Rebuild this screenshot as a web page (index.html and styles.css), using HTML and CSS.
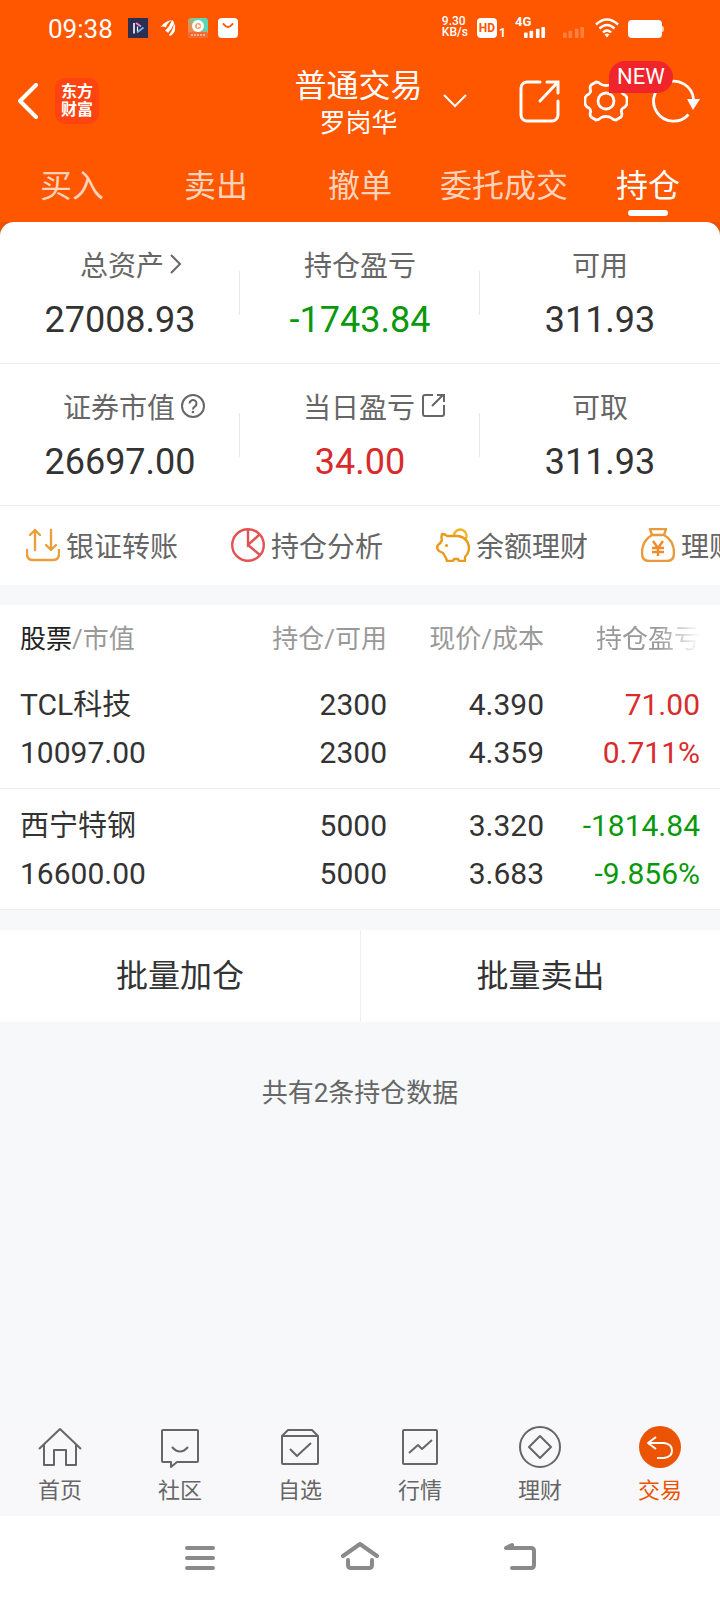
FILE: index.html
```html
<!DOCTYPE html>
<html lang="zh-CN">
<head>
    <meta charset="UTF-8">
    <meta name="viewport" content="width=device-width, initial-scale=1.0">
    <title>普通交易 - 持仓</title>
    <link rel="stylesheet" href="styles.css">
</head>
<body>
    <header class="header">
        <div class="status-bar">
            <span class="clock">09:38</span>
            <svg class="app-icon" width="20" height="20" viewBox="0 0 20 20" fill="none">
                <rect width="20" height="20" fill="#2b2f52"/>
                <path d="M6 5v10.500" stroke="#fff" stroke-width="1.6"/>
                <path d="M8 5l5 3.500" stroke="#ee8fd0" stroke-width="1.8"/>
                <path d="M15.500 9.500L9 14.500" stroke="#6fb4f5" stroke-width="1.8"/>
                <path d="M9.500 8.500V13" stroke="#fff" stroke-width="1.2"/>
            </svg>
            <svg class="app-icon" width="20" height="20" viewBox="0 0 20 20" fill="#fff">
                <path d="M2.500 9Q7 3 14 2Q9 5 8 9.500Q5 8 2.500 9zM7 13Q12 8 14 2Q16 3 16 5Q14 11 10 15Q9 13 7 13zM11 17Q15 12 16 5Q18 8 17 12Q16 16 12 18z"/>
            </svg>
            <svg class="app-icon" width="20" height="20" viewBox="0 0 20 20">
                <defs>
                    <linearGradient id="video" x1="0" y1="1" x2="1" y2="0">
                        <stop offset="0.3" stop-color="#f08a4b"/>
                        <stop offset="0.7" stop-color="#5cd6b4"/>
                    </linearGradient>
                </defs>
                <rect width="20" height="20" rx="3" fill="url(#video)"/>
                <rect y="14" width="20" height="6" rx="2" fill="#f46a35"/>
                <circle cx="10" cy="8" r="4.5" fill="#f0a060" stroke="#fff" stroke-width="3"/>
                <path d="M9 6l4 2-4 2z" fill="#fff"/>
                <path d="M3 17h14" stroke="#ffc9a8" stroke-width="1.5" stroke-dasharray="2 1"/>
            </svg>
            <svg class="app-icon" width="20" height="20" viewBox="0 0 20 20">
                <rect width="20" height="20" rx="4" fill="#fff"/>
                <path d="M5.5 6q4.500 6 9 0" fill="none" stroke="#ff5600" stroke-width="2" stroke-linecap="round"/>
            </svg>
            <div class="status-right">
                <span class="net-speed">9.30<br>KB/s</span>
                <span class="hd"><b>HD</b><i>1</i></span>
                <span class="signal">
                    <b>4G</b>
                    <svg width="24" height="11" viewBox="0 0 24 12" fill="#fff">
                        <rect y="6" width="4" height="6" rx="1"/>
                        <rect x="6" y="4" width="4" height="8" rx="1"/>
                        <rect x="13" y="2" width="4" height="10" rx="1"/>
                        <rect x="19" width="4" height="12" rx="1"/>
                    </svg>
                </span>
                <svg class="signal-off" width="24" height="11" viewBox="0 0 24 12" fill="#fff">
                    <rect y="6" width="4" height="6" rx="1"/>
                    <rect x="6" y="4" width="4" height="8" rx="1"/>
                    <rect x="13" y="2" width="4" height="10" rx="1"/>
                    <rect x="19" width="4" height="12" rx="1"/>
                </svg>
                <svg class="wifi" width="24" height="20" viewBox="0 0 24 20" fill="none" stroke="#fff" stroke-width="2.4">
                    <path d="M1 6.5q11-10 22 0M4.500 10.500q7.500-7 15 0M8 14.500q4-4 8 0"/>
                    <path d="M9.500 16.500L12 19.500l2.500-3q-2.500-2-5 0z" fill="#fff" stroke="none"/>
                </svg>
                <svg class="battery" width="36" height="18" viewBox="0 0 36 18">
                    <rect width="34" height="18" rx="4" fill="#fff"/>
                    <path d="M34 6q2 0 2 3t-2 3z" fill="#ffd0b5"/>
                </svg>
            </div>
        </div>

        <div class="top-bar">
            <div class="top-left">
                <button class="icon-btn" aria-label="返回">
                    <svg width="22" height="36" viewBox="0 0 22 36" fill="none" stroke="#fff" stroke-width="4" stroke-linecap="round" stroke-linejoin="round">
                        <path d="M19 2L3 18l16 16"/>
                    </svg>
                </button>
                <span class="logo">东方<br>财富</span>
            </div>
            <div class="account">
                <h1>普通交易</h1>
                <p>罗岗华</p>
            </div>
            <div class="top-right">
                <button class="icon-btn switch" aria-label="切换账户">
                    <svg width="24" height="14" viewBox="0 0 24 14" fill="none" stroke="#fff" stroke-width="2">
                        <path d="M1 1l11 11L23 1"/>
                    </svg>
                </button>
                <button class="icon-btn" aria-label="分享">
                    <svg width="41" height="43" viewBox="0 0 41 43" fill="none" stroke="#fff" stroke-width="3" stroke-linecap="round">
                        <path d="M21 2H8a6 6 0 0 0-6 6v27a6 6 0 0 0 6 6h25a6 6 0 0 0 6-6V21"/>
                        <path d="M21 21L38 3M28 2h11v11"/>
                    </svg>
                </button>
                <button class="icon-btn settings" aria-label="设置">
                    <svg width="44" height="44" viewBox="0 0 44 44" fill="none" stroke="#fff" stroke-width="2.8" stroke-linejoin="round">
                        <path d="M43 19v6q-1 3-4 4q-2 1.500-1.500 4q1 3-.5 5l-5 3q-3 0-4.500-2q-2-1.500-5.500-1.500t-5.500 1.500q-1.500 2-4.500 2l-5-3q-1.500-2-.5-5q.5-2.500-1.500-4q-3-1-4-4v-6q1-3 4-4q2-1.500 1.500-4q-1-3 .5-5l5-3q3 0 4.500 2q2 1.500 5.500 1.500t5.500-1.500q1.500-2 4.500-2l5 3q1.500 2 .5 5q-.5 2.500 1.500 4q3 1 4 4z"/>
                        <circle cx="22" cy="22" r="8"/>
                    </svg>
                    <span class="badge">NEW</span>
                </button>
                <button class="icon-btn" aria-label="刷新">
                    <svg width="48" height="44" viewBox="0 0 48 44">
                        <path d="M36.500 35.500A20 20 0 1 1 41.500 20" fill="none" stroke="#fff" stroke-width="2.8"/>
                        <path d="M35 20h13l-7 11z" fill="#fff"/>
                    </svg>
                </button>
            </div>
        </div>

        <nav class="tabs">
            <a href="#buy">买入</a>
            <a href="#sell">卖出</a>
            <a href="#cancel">撤单</a>
            <a href="#orders">委托成交</a>
            <a href="#positions" class="active">持仓</a>
        </nav>
    </header>

    <main>
        <section class="summary">
            <div class="stat-row">
                <div class="stat">
                    <div class="stat-label">总资产
                        <svg class="arrow" width="12" height="20" viewBox="0 0 12 20" fill="none" stroke="#666" stroke-width="2">
                            <path d="M1 1l9 9-9 9"/>
                        </svg>
                    </div>
                    <div class="stat-value">27008.93</div>
                </div>
                <div class="stat">
                    <div class="stat-label">持仓盈亏</div>
                    <div class="stat-value down">-1743.84</div>
                </div>
                <div class="stat">
                    <div class="stat-label">可用</div>
                    <div class="stat-value">311.93</div>
                </div>
            </div>
            <div class="stat-row">
                <div class="stat">
                    <div class="stat-label">证券市值
                        <svg class="hint" width="24" height="24" viewBox="0 0 24 24" fill="none" stroke="#666" stroke-width="2">
                            <circle cx="12" cy="12" r="11"/>
                            <path d="M8.500 9.500a3.500 3.500 0 1 1 5.500 2.900q-2 1.300-2 3.100"/>
                            <circle cx="12" cy="18" r="1.3" fill="#666" stroke="none"/>
                        </svg>
                    </div>
                    <div class="stat-value">26697.00</div>
                </div>
                <div class="stat">
                    <div class="stat-label">当日盈亏
                        <svg class="hint" width="24" height="24" viewBox="0 0 24 24" fill="none" stroke="#666" stroke-width="2">
                            <path d="M12 1H4a2 2 0 0 0-2 2v17a2 2 0 0 0 2 2h17a2 2 0 0 0 2-2v-9"/>
                            <path d="M11 12L22 1M16 1h7v7"/>
                        </svg>
                    </div>
                    <div class="stat-value up">34.00</div>
                </div>
                <div class="stat">
                    <div class="stat-label">可取</div>
                    <div class="stat-value">311.93</div>
                </div>
            </div>
            <nav class="shortcuts">
                <a href="#transfer">
                    <svg width="34" height="34" viewBox="0 0 34 34" fill="none" stroke="#e9a03b" stroke-width="2.4" stroke-linecap="round" stroke-linejoin="round">
                        <path d="M9 22V2M4 7l5-5 5 5M25 2v20M20 17l5 5 5-5"/>
                        <path d="M1 22v4q0 6 6 6h20q6 0 6-6v-4"/>
                    </svg>
                    银证转账
                </a>
                <a href="#analysis">
                    <svg width="34" height="34" viewBox="0 0 34 34" fill="none" stroke="#e35252" stroke-width="2.4">
                        <circle cx="17" cy="17" r="15.8"/>
                        <path d="M17 1v16l11.500-10.500M17 17l12 10"/>
                    </svg>
                    持仓分析
                </a>
                <a href="#balance">
                    <svg width="34" height="34" viewBox="0 0 34 34" fill="none" stroke="#e99a1a" stroke-width="2.4" stroke-linejoin="round">
                        <path d="M18 7a6.300 6.300 0 1 1 11 5" stroke="#efb52a"/>
                        <path d="M6 6q3 0 5 2h11c7 1 11 6 11 12 0 4-2 7-4 9v4h-6l-1-2h-4l-1 2H11l-1-3-3-5-4-2q-3-3-1-6 3-2 4-5-1-2 0-6z"/>
                        <circle cx="10.5" cy="17.5" r="1.6" fill="#e99a1a" stroke="none"/>
                    </svg>
                    余额理财
                </a>
                <a href="#wealth">
                    <svg width="34" height="34" viewBox="0 0 34 34" fill="none" stroke="#e99a3a" stroke-width="2.4" stroke-linejoin="round">
                        <path d="M11 7L9 1h16l-2 6zM11 7C4 11 1 18 1 25q0 8 7 8h18q7 0 7-8c0-7-3-14-10-18"/>
                        <path d="M12 13l5 7 5-7M11 20h12M11 24h12M17 20v8" stroke="#f08a2a"/>
                    </svg>
                    理财产品
                </a>
            </nav>
        </section>

        <section class="positions">
            <table>
                <thead>
                    <tr>
                        <th><b>股票</b>/市值</th>
                        <th>持仓/可用</th>
                        <th>现价/成本</th>
                        <th><span class="fade">持仓盈亏</span></th>
                    </tr>
                </thead>
                <tbody>
                    <tr>
                        <td>TCL<span class="cn">科技</span><br>10097.00</td>
                        <td>2300<br>2300</td>
                        <td>4.390<br>4.359</td>
                        <td class="up">71.00<br>0.711%</td>
                    </tr>
                    <tr>
                        <td><span class="cn">西宁特钢</span><br>16600.00</td>
                        <td>5000<br>5000</td>
                        <td>3.320<br>3.683</td>
                        <td class="down">-1814.84<br>-9.856%</td>
                    </tr>
                </tbody>
            </table>
        </section>

        <div class="batch">
            <button>批量加仓</button>
            <button>批量卖出</button>
        </div>

        <p class="total">共有2条持仓数据</p>
    </main>

    <nav class="tab-bar">
        <a href="#home">
            <svg width="44" height="44" viewBox="0 0 44 44">
                <path d="M1 23L22 3l21 20M6 19v20h10V24h12v15h10V19"/>
            </svg>
            首页
        </a>
        <a href="#community">
            <svg width="44" height="44" viewBox="0 0 44 44">
                <path d="M5 4h34q1 0 1 1v30q0 1-1 1H19l-6 5v-5H5q-1 0-1-1V5q0-1 1-1z"/>
                <path d="M14 21q8 9 16 0"/>
            </svg>
            社区
        </a>
        <a href="#watchlist">
            <svg width="44" height="44" viewBox="0 0 44 44">
                <path d="M4 10l6-6h24l6 6v27q0 1-1 1H5q-1 0-1-1zM4 10h36"/>
                <path d="M12 23l7 7 14-13"/>
            </svg>
            自选
        </a>
        <a href="#market">
            <svg width="44" height="44" viewBox="0 0 44 44">
                <rect x="5" y="4" width="34" height="34" rx="1"/>
                <path d="M11 27l9-8 4 4 10-9"/>
            </svg>
            行情
        </a>
        <a href="#finance">
            <svg width="44" height="44" viewBox="0 0 44 44">
                <circle cx="22" cy="21" r="20"/>
                <path d="M22 10l11 11-11 11-11-11z"/>
            </svg>
            理财
        </a>
        <a href="#trade" class="active">
            <svg width="44" height="44" viewBox="0 0 44 44">
                <circle cx="22" cy="21" r="21" fill="#ea5404"/>
                <path d="M18 11l-8 6 8 6M10 17h16q8 1 8 7.500t-8 7.500h-7" stroke="#fff"/>
            </svg>
            交易
        </a>
    </nav>

    <div class="system-nav">
        <button class="icon-btn" aria-label="最近任务">
            <svg width="40" height="32" viewBox="0 0 40 32">
                <path d="M7 6h26M7 16h26M7 26h26"/>
            </svg>
        </button>
        <button class="icon-btn" aria-label="主屏幕">
            <svg width="40" height="32" viewBox="0 0 40 32">
                <path d="M3 14L20 2l17 12M8 18v5q0 3 3 3h18q3 0 3-3v-5"/>
            </svg>
        </button>
        <button class="icon-btn" aria-label="后退">
            <svg width="40" height="32" viewBox="0 0 40 32">
                <path d="M12 3L6 6h25q3 0 3 3v14q0 3-3 3H12"/>
            </svg>
        </button>
    </div>
</body>
</html>
```
FILE: styles.css
```css
* {
    box-sizing: border-box;
}

body {
    margin: 0;
    min-height: 100vh;
    display: flex;
    flex-direction: column;
    font-family: Roboto, "Noto Sans CJK SC", sans-serif;
    background-color: #f6f8fa;
    color: #333;
}

h1, p {
    margin: 0;
    font-weight: normal;
}

a {
    color: inherit;
    text-decoration: none;
}

button {
    border: none;
    background: none;
    padding: 0;
    color: inherit;
    font-family: inherit;
    cursor: pointer;
}

svg {
    display: block;
    flex-shrink: 0;
}

.account,
.stat-label,
.shortcuts,
.tab-bar {
    font-family: "Noto Sans CJK SC", sans-serif;
}

.up {
    color: #d92b2b;
}

.down {
    color: #0b980b;
}

/* header */
.header {
    background-color: #ff5600;
    color: #fff;
}

.status-bar {
    display: flex;
    align-items: center;
    gap: 10px;
    height: 56px;
    padding: 0 56px 0 48px;
}

.clock {
    font-size: 26px;
    line-height: 32px;
    padding-top: 2px;
    margin-right: 5px;
}

.status-right {
    display: flex;
    align-items: flex-end;
    height: 20px;
    margin-left: auto;
    gap: 9px;
}

.net-speed {
    font-size: 12px;
    line-height: 11px;
    font-weight: 500;
}

.hd {
    display: flex;
    align-items: flex-end;
    gap: 2px;
    font-size: 12px;
    line-height: 10px;
}

.hd b {
    padding: 0 2px;
    line-height: 20px;
    border-radius: 4px;
    background-color: #fff;
    color: #ff5600;
}

.hd i {
    font-style: normal;
    font-weight: bold;
}

.signal b {
    display: block;
    font-size: 13px;
    line-height: 11px;
}

.signal svg {
    margin-left: 8px;
}

.signal-off {
    margin-left: 6px;
    opacity: 0.25;
}

.top-bar {
    display: grid;
    grid-template-columns: 1fr auto 1fr;
    align-items: center;
    padding: 7px 20px 7px 17px;
}

.top-left,
.top-right {
    display: flex;
    align-items: center;
}

.top-left {
    gap: 16px;
}

.top-right {
    gap: 24px;
}

.switch {
    margin: 0 auto 0 20px;
}

.logo {
    padding: 5px 6px;
    border-radius: 10px;
    background-color: #ff4411;
    font-size: 16px;
    font-weight: bold;
    line-height: 18px;
}

.account {
    text-align: center;
}

.account h1 {
    font-size: 32px;
    line-height: 40px;
}

.account p {
    font-size: 26px;
    line-height: 36px;
}

.settings {
    position: relative;
}

.badge {
    position: absolute;
    left: 25px;
    bottom: 30px;
    padding: 0 8px;
    border-radius: 16px 16px 16px 0;
    background-color: #f0242b;
    font-size: 22px;
    line-height: 32px;
}

.tabs {
    display: grid;
    grid-template-columns: repeat(5, 1fr);
    padding-top: 16px;
}

.tabs a {
    display: flex;
    flex-direction: column;
    align-items: center;
    height: 60px;
    font-size: 32px;
    line-height: 48px;
    color: #ffd2bb;
}

.tabs .active {
    color: #fff;
}

.tabs .active::after {
    content: "";
    width: 40px;
    height: 6px;
    border-radius: 3px;
    background-color: #fff;
}

/* account summary */
main {
    flex: 1;
}

.summary {
    background-color: #e85205;
}

.stat-row {
    display: grid;
    grid-template-columns: repeat(3, 1fr);
    background-color: #fff;
    border-bottom: 1px solid #ebebeb;
}

.stat-row:first-child {
    border-radius: 14px 14px 0 0;
}

.stat {
    display: flex;
    flex-direction: column;
    align-items: center;
    padding: 18px 0 11px;
    background: linear-gradient(#e8e8e8, #e8e8e8) right center / 1px 44px no-repeat;
}

.stat:last-child {
    background: none;
}

.stat-label {
    display: flex;
    align-items: center;
    font-size: 28px;
    line-height: 48px;
    color: #666;
}

.stat-value {
    font-size: 36px;
    line-height: 64px;
}

.arrow {
    margin: 0 -22px 0 6px;
}

.hint {
    margin: 0 -28px 0 6px;
}

.shortcuts {
    display: flex;
    gap: 53px;
    padding: 19px 26px 20px;
    overflow: hidden;
    background-color: #fff;
}

.shortcuts a {
    display: flex;
    align-items: center;
    flex-shrink: 0;
    gap: 6px;
    font-size: 28px;
    line-height: 40px;
    color: #666;
}

/* positions */
.positions {
    margin: 20px 0;
    background-color: #fff;
}

table {
    width: 100%;
    border-collapse: collapse;
    table-layout: fixed;
}

th, td {
    padding: 0;
    width: 157px;
    text-align: right;
    white-space: nowrap;
}

th {
    height: 63px;
    font-size: 26px;
    font-weight: normal;
    color: #999;
}

th b {
    font-weight: normal;
    color: #222;
}

td {
    padding: 13px 0 11px;
    font-size: 30px;
    line-height: 48px;
    border-bottom: 1px solid #ebebeb;
}

th:first-child,
td:first-child {
    width: auto;
    padding-left: 20px;
    text-align: left;
}

th:last-child,
td:last-child {
    width: 176px;
    padding-right: 20px;
}

.cn {
    font-size: 29px;
}

.fade {
    -webkit-mask-image: linear-gradient(to right, #000 60%, transparent);
    mask-image: linear-gradient(to right, #000 60%, transparent);
}

.batch {
    display: grid;
    grid-template-columns: 1fr 1fr;
    background-color: #fff;
}

.batch button {
    font-size: 32px;
    line-height: 92px;
}

.batch button + button {
    border-left: 1px solid #f0f0f2;
}

.total {
    padding: 50px 0;
    text-align: center;
    font-size: 26px;
    line-height: 42px;
    color: #666;
}

/* bottom navigation */
.tab-bar {
    display: grid;
    grid-template-columns: repeat(6, 1fr);
    padding: 12px 0 10px;
    background-color: #f8f8fa;
}

.tab-bar a {
    display: flex;
    flex-direction: column;
    align-items: center;
    font-size: 22px;
    line-height: 36px;
    color: #666;
}

.tab-bar svg {
    fill: none;
    stroke: #666;
    stroke-width: 2;
    stroke-linejoin: round;
}

.tab-bar .active {
    color: #ea5404;
}

.tab-bar .active svg {
    stroke: none;
}

.system-nav {
    display: flex;
    justify-content: center;
    align-items: center;
    gap: 120px;
    height: 84px;
    background-color: #fff;
}

.system-nav svg {
    fill: none;
    stroke: #8a8a8a;
    stroke-width: 4;
    stroke-linecap: round;
    stroke-linejoin: round;
}
```
